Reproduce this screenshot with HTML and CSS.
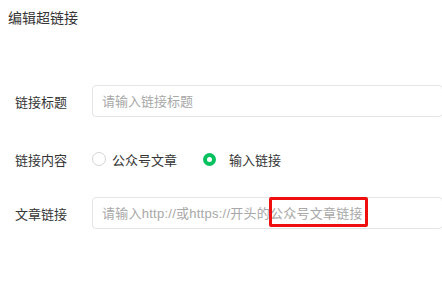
FILE: index.html
```html
<!DOCTYPE html>
<html lang="zh">
<head>
<meta charset="utf-8">
<link rel="stylesheet" href="styles.css">
</head>
<body>
<div class="dialog">
  <div class="title">编辑超链接</div>
  <div class="form">
    <div class="row row-title">
      <div class="label">链接标题</div>
      <div class="field"><input class="input" type="text" placeholder="请输入链接标题"></div>
    </div>
    <div class="row row-radio">
      <div class="label">链接内容</div>
      <div class="field radios">
        <label class="radio"><span class="dot"></span><span class="radio-text">公众号文章</span></label>
        <label class="radio checked"><span class="dot"></span><span class="radio-text">输入链接</span></label>
      </div>
    </div>
    <div class="row row-link">
      <div class="label">文章链接</div>
      <div class="field">
        <input class="input input-link" type="text" placeholder="请输入http://或https://开头的公众号文章链接">
        <span class="highlight"></span>
      </div>
    </div>
  </div>
</div>
</body>
</html>
```

FILE: styles.css
```css
* { box-sizing: border-box; }
html, body { margin: 0; padding: 0; background: #fff; }
body {
  font-family: "Liberation Sans", "Noto Sans CJK SC", sans-serif;
  color: #353535;
}
.dialog {
  width: 442px;
  height: 305px;
  overflow: hidden;
}
.title {
  font-size: 14px;
  line-height: 20px;
  padding: 8px 0 0 8px;
  height: 28px;
  color: #353535;
}
.form {
  padding-top: 57px;
  padding-left: 15px;
}
.row {
  display: flex;
  align-items: center;
  height: 32px;
}
.row-radio { margin-top: 26px; }
.row-link { margin-top: 22px; }
.label {
  width: 77px;
  font-size: 13px;
  color: #353535;
  flex-shrink: 0;
}
.field {
  position: relative;
  flex: 1;
  height: 32px;
  display: flex;
  align-items: center;
}
.input {
  width: 351px;
  flex-shrink: 0;
  height: 32px;
  border: 1px solid #e4e4e4;
  border-radius: 4px;
  padding: 0 9px;
  font-family: "Liberation Sans", "Noto Sans CJK SC", sans-serif;
  font-size: 13px;
  color: #353535;
  outline: none;
  background: #fff;
}
.input-link { letter-spacing: 0.25px; }
.input::placeholder { color: #a8a8a8; }
.radio {
  display: flex;
  align-items: center;
  font-size: 13px;
  color: #353535;
}
.radio + .radio { margin-left: 26px; }
.dot {
  width: 14px;
  height: 14px;
  border-radius: 50%;
  border: 1px solid #d4d4d4;
  margin-right: 6px;
  background: #fff;
}
.checked .dot {
  width: 13px;
  height: 13px;
  border: 4px solid #07c160;
  margin-right: 13px;
}
.highlight {
  position: absolute;
  left: 177px;
  top: 0;
  width: 99px;
  height: 30px;
  border: 3px solid #f00f0f;
  border-radius: 2px;
}
```
